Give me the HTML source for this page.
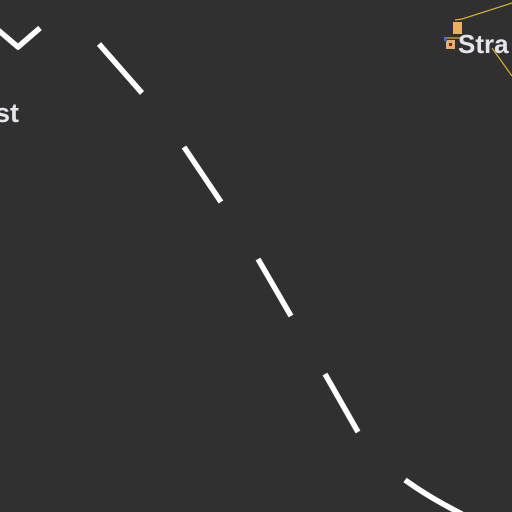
<!DOCTYPE html>
<html><head><style>
html,body{margin:0;padding:0;width:512px;height:512px;overflow:hidden;background:#303030}
.t{position:absolute;font-family:"Liberation Sans",sans-serif;font-weight:bold;color:#e4e4ea;white-space:nowrap}
</style></head><body>
<svg width="512" height="512" style="position:absolute;left:0;top:0">
<g stroke="#fff" stroke-width="5.5" fill="none">
<polyline points="-2,30 18,47 40,28" stroke-linejoin="round"/>
<line x1="99" y1="44" x2="142" y2="93"/>
<line x1="184" y1="147" x2="221" y2="202"/>
<line x1="258" y1="259" x2="291" y2="316"/>
<line x1="325" y1="374" x2="358" y2="432"/>
<path d="M405,480 Q430,498 462,514"/>
</g>
<g stroke="#d8b030" stroke-width="1.2" fill="none">
<polyline points="455,20 462,19 512,3"/>
<line x1="492" y1="48" x2="512" y2="76"/>
<line x1="444" y1="38" x2="462" y2="38"/>
</g>
<rect x="453" y="22" width="9" height="12" fill="#e8b060"/>
<rect x="446" y="40" width="9" height="9" fill="#e0b070"/>
<rect x="449" y="43" width="3" height="3" fill="#a01010"/>
<rect x="444" y="38" width="3" height="3" fill="#2a6ad0"/>
</svg>
<div class="t" style="left:-5px;top:98px;font-size:27px">st</div>
<div class="t" style="left:458px;top:29px;font-size:26px">Stra</div>
</body></html>
